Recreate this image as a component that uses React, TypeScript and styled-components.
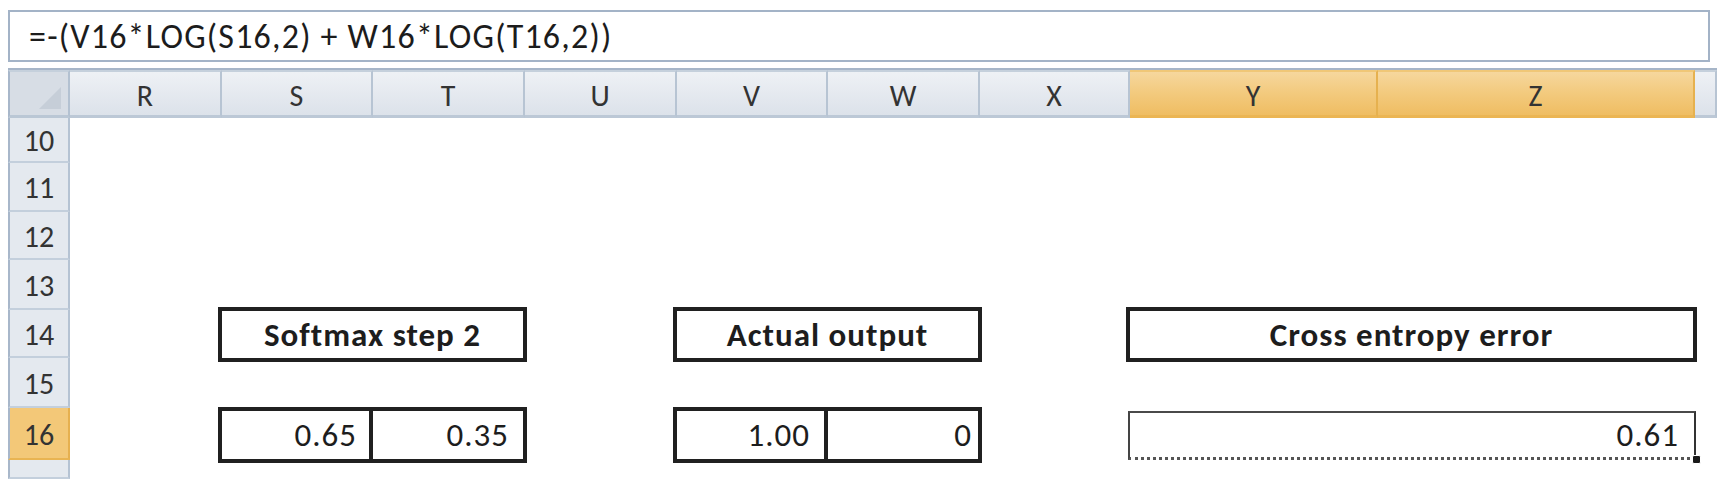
import React from "react";
import styled, { createGlobalStyle } from "styled-components";

const GlobalStyle = createGlobalStyle`
  html, body {
    margin: 0;
    padding: 0;
    background: #ffffff;
  }
  body {
    font-family: Carlito, Calibri, Lato, "Open Sans", sans-serif;
    color: #1f1f1f;
    overflow: hidden;
  }
`;

const Page = styled.div`
  width: 1725px;
  height: 479px;
  box-sizing: border-box;
  padding: 10px 8px 0 8px;
  display: flex;
  flex-direction: column;
  gap: 6px;
  overflow: hidden;
`;

const FormulaBar = styled.div`
  height: 52px;
  box-sizing: border-box;
  margin-right: 7px;
  border: 2px solid #a3b3c7;
  background: #ffffff;
  display: flex;
  align-items: center;
  padding-left: 19px;
  font-size: 34px;
  letter-spacing: 1.2px;
  color: #1c1c1c;
  white-space: nowrap;
`;

const Sheet = styled.div`
  display: grid;
  grid-template-columns: 62px 152px 151px 152px 152px 151px 152px 150px 248px 317px 1fr;
  grid-template-rows: 48px 45px 49px 48px 50px 48px 50px 52px 19px;
  border-top: 2px solid #a6b5c8;
`;

const Corner = styled.div`
  grid-column: 1;
  grid-row: 1;
  box-sizing: border-box;
  background: #d7dde5;
  border-left: 2px solid #a8b7ca;
  border-top: 2px solid #c5d0dc;
  border-right: 2px solid #b3c1d1;
  border-bottom: 3px solid #bac7d5;
  display: flex;
  align-items: flex-end;
  justify-content: flex-end;
  padding: 0 6px 5px 0;
`;

const ColHeader = styled.div<{ $selected?: boolean; $col: number }>`
  grid-column: ${(p) => p.$col};
  grid-row: 1;
  box-sizing: border-box;
  display: flex;
  align-items: center;
  justify-content: center;
  padding-top: 4px;
  font-size: 30px;
  color: #333333;
  background: ${(p) =>
    p.$selected
      ? "linear-gradient(180deg, #f6d79d 0%, #f3cb80 45%, #efbd62 100%)"
      : "linear-gradient(180deg, #eef1f5 0%, #e6eaf0 45%, #dce2ea 100%)"};
  border-top: 2px solid ${(p) => (p.$selected ? "#f0c777" : "#c5d0dc")};
  border-right: 2px solid ${(p) => (p.$selected ? "#e6b14f" : "#b7c4d3")};
  border-bottom: 3px solid ${(p) => (p.$selected ? "#ebb553" : "#bcc8d6")};
`;

const RowHeader = styled.div<{ $selected?: boolean; $row: number }>`
  grid-column: 1;
  grid-row: ${(p) => p.$row};
  box-sizing: border-box;
  display: flex;
  align-items: center;
  justify-content: center;
  padding-top: 2px;
  font-size: 30px;
  color: #333333;
  background: ${(p) => (p.$selected ? "#f3c878" : "#e4e9ef")};
  border-left: 2px solid #a8b7ca;
  border-right: 2px solid ${(p) => (p.$selected ? "#e6b04f" : "#b5c3d3")};
  border-bottom: 2px solid ${(p) => (p.$selected ? "#e9b452" : "#c3cfdc")};
`;

const LabelBox = styled.div<{ $col: number; $span: number; $row: number }>`
  grid-column: ${(p) => p.$col} / span ${(p) => p.$span};
  grid-row: ${(p) => p.$row};
  margin: -3px -2px -4px -4px;
  border: 4px solid #202020;
  background: #ffffff;
  display: flex;
  align-items: center;
  justify-content: center;
  font-size: 33px;
  letter-spacing: 1px;
  font-weight: 700;
  color: #1d1d1d;
  white-space: nowrap;
`;

const ValueBox = styled.div<{ $col: number; $row: number; $pad: number }>`
  grid-column: ${(p) => p.$col};
  grid-row: ${(p) => p.$row};
  margin: -1px -2px -3px -4px;
  border: 4px solid #202020;
  background: #ffffff;
  display: flex;
  align-items: center;
  justify-content: flex-end;
  padding-right: ${(p) => p.$pad}px;
  font-size: 33px;
  letter-spacing: 1px;
  color: #1d1d1d;
`;

const ActiveCell = styled.div<{ $col: number; $span: number; $row: number }>`
  grid-column: ${(p) => p.$col} / span ${(p) => p.$span};
  grid-row: ${(p) => p.$row};
  position: relative;
  margin: 3px -1px 0 -2px;
  border-left: 2px solid #444444;
  border-top: 2px solid #4a4a4a;
  border-right: 2px solid #333333;
  border-bottom: 3px dotted #555555;
  display: flex;
  align-items: center;
  justify-content: flex-end;
  padding-right: 15px;
  font-size: 33px;
  letter-spacing: 1px;
  color: #1d1d1d;
`;

const FillHandle = styled.span`
  position: absolute;
  right: -7px;
  bottom: -7px;
  width: 9px;
  height: 9px;
  box-sizing: border-box;
  background: #1a1a1a;
  border: 1px solid #ffffff;
  border-radius: 2px;
`;

const columns = [
  { label: "R", selected: false },
  { label: "S", selected: false },
  { label: "T", selected: false },
  { label: "U", selected: false },
  { label: "V", selected: false },
  { label: "W", selected: false },
  { label: "X", selected: false },
  { label: "Y", selected: true },
  { label: "Z", selected: true },
  { label: "", selected: false },
];

const rows = [
  { label: "10", selected: false },
  { label: "11", selected: false },
  { label: "12", selected: false },
  { label: "13", selected: false },
  { label: "14", selected: false },
  { label: "15", selected: false },
  { label: "16", selected: true },
  { label: "", selected: false },
];

export default function App() {
  return (
    <>
      <GlobalStyle />
      <Page>
        <FormulaBar>=-(V16*LOG(S16,2) + W16*LOG(T16,2))</FormulaBar>
        <Sheet>
          <Corner>
            <svg width="24" height="24" viewBox="0 0 24 24">
              <polygon points="23,1 23,23 1,23" fill="#c6ced8" />
            </svg>
          </Corner>
          {columns.map((c, i) => (
            <ColHeader key={i} $col={i + 2} $selected={c.selected}>
              {c.label}
            </ColHeader>
          ))}
          {rows.map((r, i) => (
            <RowHeader key={i} $row={i + 2} $selected={r.selected}>
              {r.label}
            </RowHeader>
          ))}

          <LabelBox $col={3} $span={2} $row={6}>Softmax step 2</LabelBox>
          <LabelBox $col={6} $span={2} $row={6}>Actual output</LabelBox>
          <LabelBox $col={9} $span={2} $row={6}>Cross entropy error</LabelBox>

          <ValueBox $col={3} $row={8} $pad={14}>0.65</ValueBox>
          <ValueBox $col={4} $row={8} $pad={14}>0.35</ValueBox>
          <ValueBox $col={6} $row={8} $pad={16}>1.00</ValueBox>
          <ValueBox $col={7} $row={8} $pad={6}>0</ValueBox>

          <ActiveCell $col={9} $span={2} $row={8}>
            0.61
            <FillHandle />
          </ActiveCell>
        </Sheet>
      </Page>
    </>
  );
}
